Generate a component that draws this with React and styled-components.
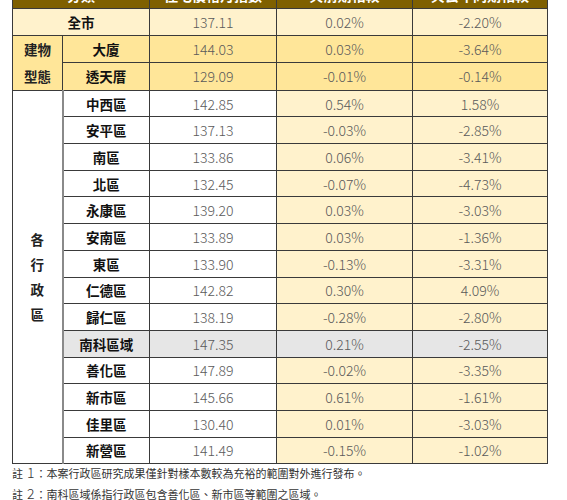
import React from 'react';
import styled, { createGlobalStyle } from 'styled-components';

const GlobalStyle = createGlobalStyle`
  html, body {
    margin: 0;
    padding: 0;
    background: #ffffff;
    overflow: hidden;
  }
  body {
    font-family: "Noto Sans CJK TC", "Noto Sans", sans-serif;
  }
`;

const GOLD_DARK = '#7f6000';
const GOLD_LIGHT = '#fff2cc';
const GOLD_MID = '#ffe699';
const GREY = '#e6e6e6';

const districts = [
  { name: '中西區', index: '142.85', prev: '0.54%', yoy: '1.58%' },
  { name: '安平區', index: '137.13', prev: '-0.03%', yoy: '-2.85%' },
  { name: '南區', index: '133.86', prev: '0.06%', yoy: '-3.41%' },
  { name: '北區', index: '132.45', prev: '-0.07%', yoy: '-4.73%' },
  { name: '永康區', index: '139.20', prev: '0.03%', yoy: '-3.03%' },
  { name: '安南區', index: '133.89', prev: '0.03%', yoy: '-1.36%' },
  { name: '東區', index: '133.90', prev: '-0.13%', yoy: '-3.31%' },
  { name: '仁德區', index: '142.82', prev: '0.30%', yoy: '4.09%' },
  { name: '歸仁區', index: '138.19', prev: '-0.28%', yoy: '-2.80%' },
  { name: '南科區域', index: '147.35', prev: '0.21%', yoy: '-2.55%', highlight: true },
  { name: '善化區', index: '147.89', prev: '-0.02%', yoy: '-3.35%' },
  { name: '新市區', index: '145.66', prev: '0.61%', yoy: '-1.61%' },
  { name: '佳里區', index: '130.40', prev: '0.01%', yoy: '-3.03%' },
  { name: '新營區', index: '141.49', prev: '-0.15%', yoy: '-1.02%' },
];

const buildings = [
  { name: '大廈', index: '144.03', prev: '0.03%', yoy: '-3.64%' },
  { name: '透天厝', index: '129.09', prev: '-0.01%', yoy: '-0.14%' },
];

const Page = styled.div`
  padding-left: 12px;
  width: 567px;
  height: 500px;
  box-sizing: border-box;
  overflow: hidden;
`;

const Scroller = styled.div`
  margin-top: -19px;
`;

const Table = styled.table`
  border-collapse: collapse;
  table-layout: fixed;
  width: 535px;
  border: 1px solid #3a3a3a;
`;

const Row = styled.tr`
  height: 26.7px;
`;

const HeadCell = styled.th`
  background: ${GOLD_DARK};
  color: #ffffff;
  font-size: 14px;
  font-weight: 700;
  text-align: center;
  padding: 0;
  border: 1px solid #3a3a3a;
  height: 26px;
`;

const GroupCell = styled.td`
  background: ${(p) => p.$bg || '#ffffff'};
  color: #222;
  font-size: 13.5px;
  font-weight: 700;
  text-align: center;
  padding: 0;
  line-height: ${(p) => p.$lh || '27px'};
  border: 1px solid #3a3a3a;
`;

const NameCell = styled.td`
  background: ${(p) => p.$bg || '#ffffff'};
  color: #111;
  font-size: 13.5px;
  font-weight: 700;
  text-align: center;
  padding: 0;
  border: 1px solid #3a3a3a;
  border-left: ${(p) => (p.$soft ? '2px solid #8a8a8a' : '1px solid #3a3a3a')};
`;

const NumCell = styled.td`
  background: ${(p) => p.$bg || '#ffffff'};
  color: #5a5a5a;
  font-size: 14px;
  font-weight: 300;
  text-align: center;
  padding: 0;
  border: 1px solid #3a3a3a;
`;

const Notes = styled.div`
  margin-top: -2px;
  color: #333;
  font-size: 11px;
`;

const Note = styled.p`
  margin: 0;
  height: 21px;
  line-height: 21px;
  display: flex;
  align-items: baseline;
`;

const NoteMark = styled.span`
  font-size: 11px;
  margin-right: 4px;
`;

const NoteNum = styled.span`
  font-size: 14px;
  font-weight: 300;
  margin-right: 1px;
`;

const DataCells = ({ item, bg, numBg }) => (
  <>
    <NumCell $bg={bg}>{item.index}</NumCell>
    <NumCell $bg={numBg || bg}>{item.prev}</NumCell>
    <NumCell $bg={numBg || bg}>{item.yoy}</NumCell>
  </>
);

export default function App() {
  return (
    <Page>
      <GlobalStyle />
      <Scroller>
        <Table>
          <colgroup>
            <col style={{ width: 50 }} />
            <col style={{ width: 87 }} />
            <col style={{ width: 127 }} />
            <col style={{ width: 136 }} />
            <col style={{ width: 135 }} />
          </colgroup>
          <thead>
            <Row>
              <HeadCell colSpan={2}>分類</HeadCell>
              <HeadCell>住宅價格月指數</HeadCell>
              <HeadCell>與前期相較</HeadCell>
              <HeadCell>與去年同期相較</HeadCell>
            </Row>
          </thead>
          <tbody>
            <Row>
              <NameCell colSpan={2} $bg={GOLD_LIGHT}>全市</NameCell>
              <DataCells item={{ index: '137.11', prev: '0.02%', yoy: '-2.20%' }} bg={GOLD_LIGHT} />
            </Row>
            {buildings.map((b, i) => (
              <Row key={b.name}>
                {i === 0 && (
                  <GroupCell rowSpan={2} $bg={GOLD_MID}>
                    建物<br />型態
                  </GroupCell>
                )}
                <NameCell $bg={GOLD_MID}>{b.name}</NameCell>
                <DataCells item={b} bg={GOLD_MID} />
              </Row>
            ))}
            {districts.map((d, i) => (
              <Row key={d.name}>
                {i === 0 && (
                  <GroupCell rowSpan={districts.length} $lh="25px">
                    各<br />行<br />政<br />區
                  </GroupCell>
                )}
                <NameCell $soft $bg={d.highlight ? GREY : undefined}>{d.name}</NameCell>
                <DataCells
                  item={d}
                  bg={d.highlight ? GREY : '#ffffff'}
                  numBg={d.highlight ? GREY : GOLD_LIGHT}
                />
              </Row>
            ))}
          </tbody>
        </Table>
        <Notes>
          <Note>
            <NoteMark>註</NoteMark>
            <NoteNum>1</NoteNum>：本案行政區研究成果僅針對樣本數較為充裕的範圍對外進行發布。
          </Note>
          <Note>
            <NoteMark>註</NoteMark>
            <NoteNum>2</NoteNum>：南科區域係指行政區包含善化區、新市區等範圍之區域。
          </Note>
        </Notes>
      </Scroller>
    </Page>
  );
}
